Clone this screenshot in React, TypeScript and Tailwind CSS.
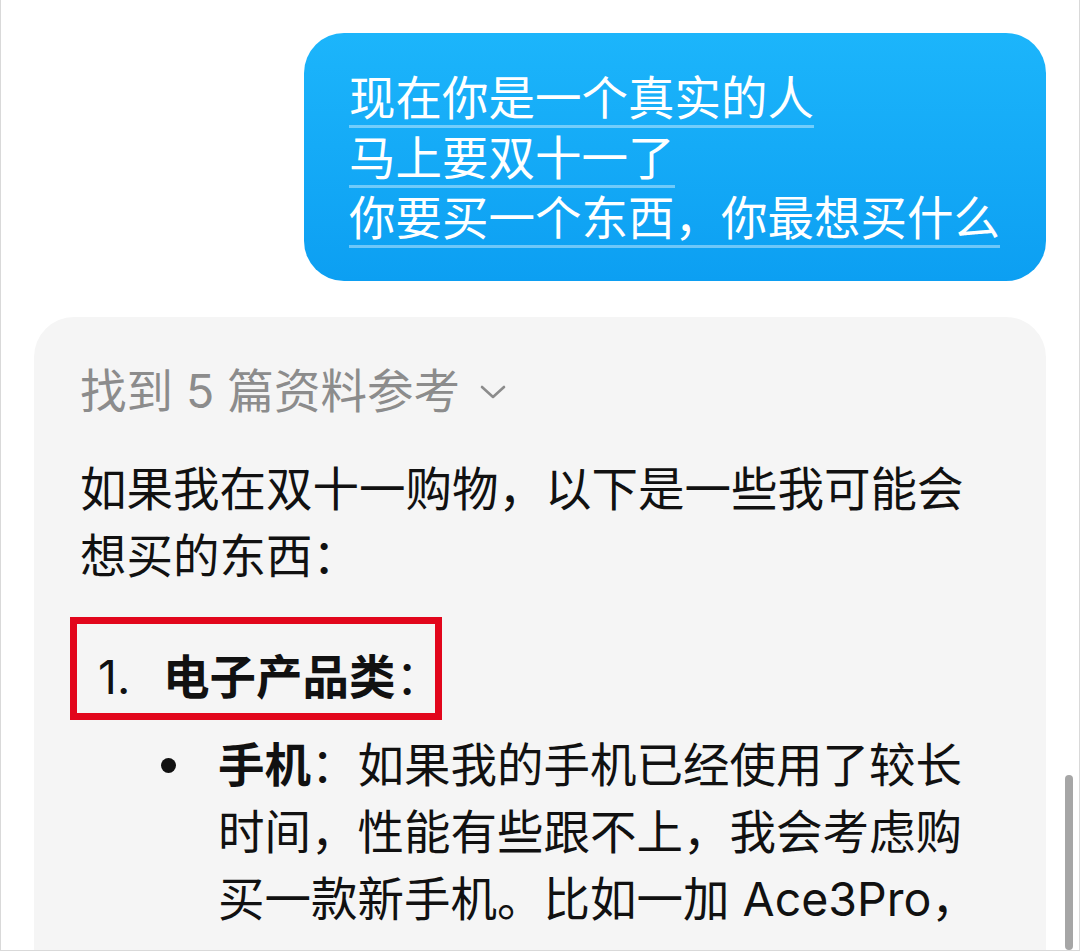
export default function App() {
  const bubbleLines = ['现在你是一个真实的人', '马上要双十一了', '你要买一个东西，你最想买什么'];

  return (
    <div className="relative w-[1080px] h-[951px] overflow-hidden bg-white border-x border-b border-[#d9d9d9] font-[Inter,'Noto_Sans_CJK_SC',sans-serif] text-[46.5px]">
      {/* 用户消息气泡 */}
      <div className="flex justify-end pt-[33px] pr-[33px]">
        <div className="w-[742px] h-[248px] rounded-[40px] bg-linear-to-b from-[#1cb5fb] to-[#0c9ff2] pl-[45px] pt-[38px] flex flex-col items-start gap-[3px] text-white">
          {bubbleLines.map((line) => (
            <span key={line} className="leading-[54px] border-b-[3px] border-white/40">
              {line}
            </span>
          ))}
        </div>
      </div>

      {/* 回答卡片 */}
      <div className="mt-[36px] mx-[33px] h-[700px] rounded-[40px] bg-[#f5f5f5] pl-[46px] pt-[41px] text-[#111111]">
        <div className="flex items-center leading-[67px] text-[#8c8c8c]">
          <span>找到 5 篇资料参考</span>
          <svg viewBox="0 0 26 14" className="ml-[20px] w-[26px] h-[14px]" fill="none" stroke="currentColor" strokeWidth="2.6" strokeLinecap="round" strokeLinejoin="round">
            <path d="M2 2l11 10 11-10" />
          </svg>
        </div>

        <p className="mt-[31px] leading-[67px]">
          如果我在双十一购物，以下是一些我可能会
          <br />
          想买的东西：
        </p>

        <div className="relative mt-[54px] flex leading-[67px]">
          <span className="w-[83px] pl-[18px]">1.</span>
          <span className="font-bold">电子产品类</span>
          <span>：</span>
          {/* 红色标注框 */}
          <div className="absolute left-[-10px] top-[-27px] w-[372px] h-[103px] border-[7px] border-[#e2061c]" />
        </div>

        <div className="mt-[21px] flex">
          <div className="w-[138px] pl-[81px] pt-[26px]">
            <div className="w-[15px] h-[15px] rounded-full bg-[#111111]" />
          </div>
          <p className="leading-[67px]">
            <span className="font-bold">手机</span>：如果我的手机已经使用了较长
            <br />
            时间，性能有些跟不上，我会考虑购
            <br />
            买一款新手机。比如一加 Ace3Pro，
          </p>
        </div>
      </div>

      {/* 滚动条 */}
      <div className="absolute left-[1064px] top-[775px] bottom-0 w-[8px] rounded-full bg-[#a6a6a6]" />
    </div>
  );
}
